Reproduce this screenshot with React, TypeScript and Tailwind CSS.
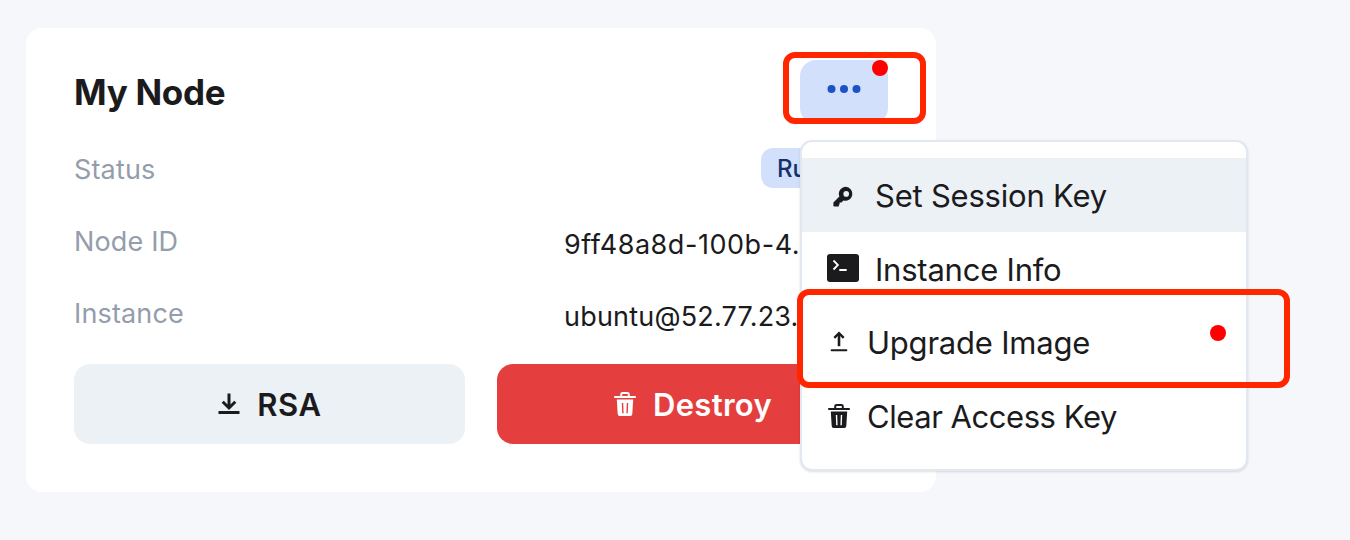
import type { ReactNode } from "react";

function DownloadIcon() {
  return (
    <svg className="h-6 w-6 shrink-0" viewBox="0 0 24 24" fill="none" stroke="currentColor" strokeWidth="3">
      <path d="M12 1.5v14M5.7 9.8l6.3 6.2 6.3-6.2" />
      <path d="M1.5 20.5h21" />
    </svg>
  );
}

function UploadIcon() {
  return (
    <svg className="-mt-[3px] h-6 w-6 shrink-0" viewBox="0 0 24 24" fill="none" stroke="currentColor" strokeWidth="2">
      <path d="M12 17.2V4.5" strokeWidth="2.6" />
      <path d="M7.3 8.9 12 4.1l4.7 4.8" strokeWidth="2.4" />
      <path d="M4.6 21.2h14.8" strokeLinecap="round" />
    </svg>
  );
}

function TrashIcon() {
  return (
    <svg className="h-6 w-6 shrink-0" viewBox="0 0 24 24" fill="none">
      <path d="M8.2 4.6V2.3Q8.2 1 9.6 1h4.8q1.4 0 1.4 1.3v2.3" stroke="currentColor" strokeWidth="2" />
      <path d="M1.2 5h21.6" stroke="currentColor" strokeWidth="2" />
      <path
        fill="currentColor"
        fillRule="evenodd"
        d="M3.8 7.6h16.4l-.9 14.5q-.1 1.9-2 1.9H6.7q-1.9 0-2-1.9ZM8.8 10.9l.4 10.3h1.4l-.4-10.3Zm5 0-.4 10.3h1.4l.4-10.3Z"
      />
    </svg>
  );
}

function KeyIcon() {
  return (
    <svg className="h-6 w-6 shrink-0" viewBox="0 0 24 24" fill="currentColor">
      <path
        fillRule="evenodd"
        d="M14.8 2.8a7 7 0 1 1-2.4 13.7l-1.9 1.9H8.6v2.1H7.9v1.9H3.3q-.9 0-.9-.9v-2.9l6-6A7 7 0 0 1 14.8 2.8Zm.4 4.3a2.8 2.8 0 1 0 0 5.6 2.8 2.8 0 0 0 0-5.6Z"
      />
    </svg>
  );
}

function TerminalIcon() {
  return (
    <svg className="-mt-[2px] h-7 w-8 shrink-0" viewBox="0 0 32 28" fill="none">
      <rect width="32" height="28" rx="3" fill="currentColor" />
      <path d="m6.5 6.5 4.4 4.5-4.4 4.5" stroke="white" strokeWidth="1.8" />
      <path d="M12.3 16h7.4" stroke="white" strokeWidth="2" />
    </svg>
  );
}

function Row({ label, children }: { label: string; children: ReactNode }) {
  return (
    <div className="flex h-10 items-center">
      <span className="w-[490px] pt-[3px] text-[27px] leading-10 tracking-[0.15px] text-[#949dab]">{label}</span>
      {children}
    </div>
  );
}

interface MenuItemProps {
  icon: ReactNode;
  label: string;
  className?: string;
  notice?: boolean;
}

function MenuItem({ icon, label, className = "tracking-[-0.22px]", notice = false }: MenuItemProps) {
  return (
    <div className={`flex h-[73.6px] items-center pl-[25px] pt-[2px] ${className}`}>
      {icon}
      <span className="ml-4 pt-px text-[31px] leading-[48px]">{label}</span>
      {notice && <span className="mb-[20px] ml-auto mr-5 h-4 w-4 rounded-full bg-[#ff0000]" />}
    </div>
  );
}

export default function App() {
  return (
    <main className="relative h-[540px] w-[1350px] overflow-hidden bg-[#f5f7fb] pl-[26px] pt-7 font-['Inter',sans-serif] text-[#1b1b1d]">
      <section className="h-[464px] w-[910px] rounded-2xl bg-white px-12 pt-8">
        <header className="flex h-16 items-center justify-between">
          <h1 className="text-[35px] font-bold leading-[48px] tracking-[-0.3px]">My Node</h1>
          <button className="relative flex h-16 w-[88px] items-center justify-center rounded-2xl bg-[#d3e0fc] pb-[6px] text-[#1d52c4]">
            <svg className="h-2 w-[34px]" viewBox="0 0 34 8" fill="currentColor">
              <circle cx="4.5" cy="4" r="4" />
              <circle cx="17" cy="4" r="4" />
              <circle cx="29.5" cy="4" r="4" />
            </svg>
            <span className="absolute right-0 top-0 h-4 w-4 rounded-full bg-[#ff0000]" />
          </button>
        </header>
        <div className="mt-6 flex flex-col gap-8">
          <Row label="Status">
            <span className="-mr-px ml-auto flex h-10 w-[128px] items-center rounded-xl bg-[#d3e0fc] px-4 pt-[2px] text-2xl font-medium text-[#163069]">Running</span>
          </Row>
          <Row label="Node ID">
            <span className="w-[240px] whitespace-nowrap pt-[9px] text-[27px] leading-10 tracking-[0.55px]">9ff48a8d-100b-4...</span>
          </Row>
          <Row label="Instance">
            <span className="w-[240px] whitespace-nowrap pt-[9px] text-[27px] leading-10 tracking-[0.2px]">ubuntu@52.77.23...</span>
          </Row>
        </div>
        <div className="mt-8 grid grid-cols-2 gap-8">
          <button className="flex h-20 items-center justify-center gap-4 rounded-2xl bg-[#ecf1f6] text-[31px] font-semibold tracking-[0.6px]">
            <DownloadIcon />
            <span className="pt-[2px]">RSA</span>
          </button>
          <button className="flex h-20 items-center justify-center gap-4 rounded-2xl bg-[#e53e3e] text-[31px] font-semibold tracking-[0.3px] text-white">
            <TrashIcon />
            <span className="pt-[2px]">Destroy</span>
          </button>
        </div>
      </section>

      <div className="absolute left-[800px] top-[140px] h-[331px] w-[448px] rounded-xl border-2 border-[#e2e8f0] bg-white pt-4 shadow-sm">
        <MenuItem className="bg-[#ecf1f6] tracking-[-0.22px]" icon={<span className="flex w-8 pl-1"><KeyIcon /></span>} label="Set Session Key" />
        <MenuItem icon={<TerminalIcon />} label="Instance Info" />
        <MenuItem icon={<UploadIcon />} label="Upgrade Image" notice />
        <MenuItem className="tracking-[-0.45px]" icon={<span className="-mt-px flex"><TrashIcon /></span>} label="Clear Access Key" />
      </div>

      <div className="absolute left-[783px] top-[52px] h-[72px] w-[143px] rounded-xl border-[6px] border-[#ff2600]" />
      <div className="absolute left-[797px] top-[289px] h-[99px] w-[493px] rounded-xl border-[6px] border-[#ff2600]" />
    </main>
  );
}
